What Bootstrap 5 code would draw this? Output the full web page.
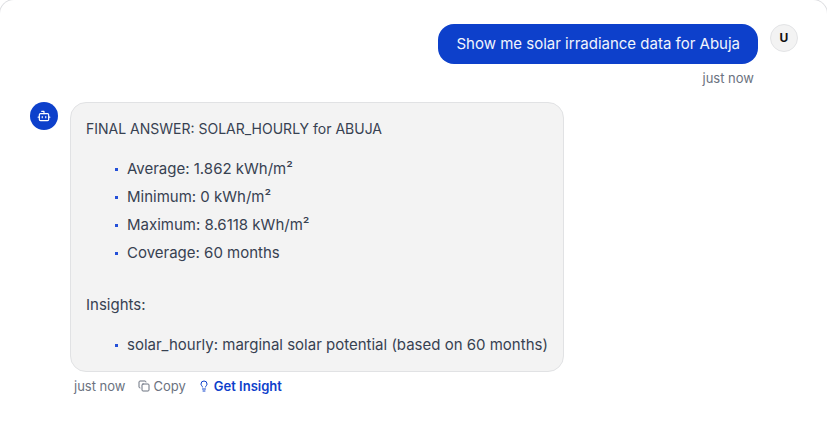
<!DOCTYPE html>
<html lang="en">
<head>
<meta charset="utf-8">
<meta name="viewport" content="width=device-width, initial-scale=1">
<title>Chat</title>
<link href="https://cdn.jsdelivr.net/npm/bootstrap@5.3.0/dist/css/bootstrap.min.css" rel="stylesheet">
<style>
  body { font-family: Inter, "Open Sans", sans-serif; font-size: 14px; line-height: 20px; color: #374151; background: #fff; }
  .chat-panel { padding: 24px 29px 32px 30px; border-radius: 14px 14px 0 0; box-shadow: 0 0 0 1px #dcdde0; }
  .chat-row { gap: 12px; }
  .chat-stack { min-width: 0; }
  .avatar { width: 28px; height: 28px; font-size: 12px; }
  .avatar-bot { background: #0d40cb; color: #fff; }
  .avatar-user { background: #f3f3f3; border: 1px solid #e3e4e6; color: #111; }
  .bubble { border-radius: 16px; font-size: 15px; }
  .bubble-user { background: #0d40cb; color: #f1f4fd; padding: 10px 18px; }
  .bubble-bot { background: #f3f3f3; border: 1px solid #e1e2e4; padding: 16px 15px 12px; }
  .bubble-bot p { margin-bottom: 16px; }
  .bubble-bot .answer-title { font-size: 14px; }
  .facts { list-style: none; padding-left: 29px; margin-bottom: 28px; }
  .facts:last-child { margin-bottom: 0; }
  .facts li { display: flex; align-items: center; gap: 9px; padding: 4px 0; }
  .facts li::before { content: ""; flex: none; width: 3px; height: 3px; background: #2450d8; }
  .meta { font-size: 13px; line-height: 16px; color: #6b7280; margin-top: 6px; gap: 12px; }
  .meta-btn { border: 0; padding: 0; background: none; color: inherit; }
  .meta-insight { color: #0d40cb; }
</style>
<script src="https://cdn.jsdelivr.net/npm/bootstrap@5.3.0/dist/js/bootstrap.bundle.min.js"></script>
</head>
<body>
<main class="chat-panel min-vh-100 d-flex flex-column gap-3">
  <section class="chat-row d-flex justify-content-end align-items-start">
    <div class="chat-stack d-flex flex-column align-items-end">
      <div class="bubble bubble-user">Show me solar irradiance data for Abuja</div>
      <div class="meta px-1">just now</div>
    </div>
    <div class="avatar avatar-user rounded-circle d-flex align-items-center justify-content-center fw-bold flex-shrink-0">U</div>
  </section>
  <section class="chat-row d-flex align-items-start">
    <div class="avatar avatar-bot rounded-circle d-flex align-items-center justify-content-center flex-shrink-0">
      <svg width="14" height="14" viewBox="0 0 24 24" fill="none" stroke="currentColor" stroke-width="2" stroke-linecap="round" stroke-linejoin="round" aria-hidden="true"><path d="M12 8V4H8"/><rect width="16" height="12" x="4" y="8" rx="2"/><path d="M2 14h2M20 14h2M15 13v2M9 13v2"/></svg>
    </div>
    <div class="chat-stack">
      <div class="bubble bubble-bot">
        <p class="answer-title">FINAL ANSWER: SOLAR_HOURLY for ABUJA</p>
        <ul class="facts">
          <li>Average: 1.862 kWh/m²</li>
          <li>Minimum: 0 kWh/m²</li>
          <li>Maximum: 8.6118 kWh/m²</li>
          <li>Coverage: 60 months</li>
        </ul>
        <p>Insights:</p>
        <ul class="facts">
          <li>solar_hourly: marginal solar potential (based on 60 months)</li>
        </ul>
      </div>
      <div class="meta d-flex align-items-center px-1">
        <span>just now</span>
        <button type="button" class="meta-btn d-inline-flex align-items-center gap-1">
          <svg width="12" height="12" viewBox="0 0 24 24" fill="none" stroke="currentColor" stroke-width="2" stroke-linecap="round" stroke-linejoin="round" aria-hidden="true"><rect width="14" height="14" x="8" y="8" rx="2"/><path d="M4 16c-1.100 0-2-.9-2-2V4c0-1.100.9-2 2-2h10c1.100 0 2 .9 2 2"/></svg>
          Copy</button>
        <button type="button" class="meta-btn meta-insight fw-semibold d-inline-flex align-items-center gap-1">
          <svg width="12" height="12" viewBox="0 0 24 24" fill="none" stroke="currentColor" stroke-width="2" stroke-linecap="round" stroke-linejoin="round" aria-hidden="true"><path d="M15 14c.2-1 .7-1.700 1.500-2.500 1-.9 1.500-2.200 1.500-3.500A6 6 0 0 0 6 8c0 1 .2 2.200 1.500 3.500.7.7 1.300 1.500 1.500 2.500M9 18h6M10 22h4"/></svg>
          Get Insight</button>
      </div>
    </div>
  </section>
</main>
</body>
</html>
